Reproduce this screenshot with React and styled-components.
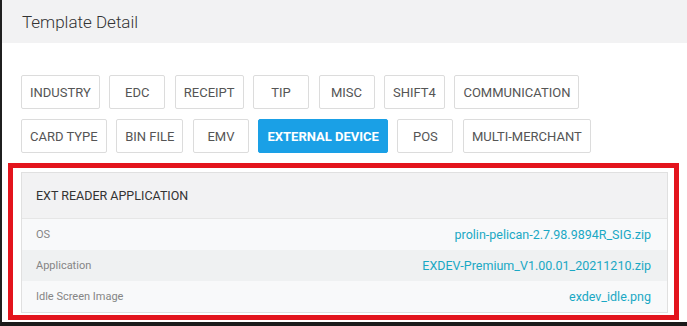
import React, { useState } from "react";
import styled, { createGlobalStyle } from "styled-components";

const GlobalStyle = createGlobalStyle`
  html, body {
    margin: 0;
    padding: 0;
    background: #fff;
  }
  body {
    font-family: Roboto, "Liberation Sans", Arial, sans-serif;
  }
`;

const Card = styled.div`
  box-sizing: border-box;
  height: 326px;
  border-left: 2px solid #1f1f1f;
  border-bottom: 4px solid #1a1a1a;
  background: #fff;
  overflow: hidden;
`;

const CardHeader = styled.div`
  height: 43px;
  display: flex;
  align-items: center;
  padding-left: 20px;
  background: #f2f2f3;
  color: #333;
  font-size: 17px;
  font-weight: 300;
`;

const CardBody = styled.div`
  padding: 32px 8px 0 6px;
`;

const TabGroup = styled.div`
  display: flex;
  flex-wrap: wrap;
  gap: 10px 9.5px;
  max-width: 640px;
  padding-left: 13px;
`;

const TabButton = styled.button`
  box-sizing: border-box;
  height: 34px;
  min-width: 56px;
  padding: 0 8px;
  border: 1px solid ${(p) => (p.$active ? "#1aa0e6" : "#dcdcdc")};
  border-radius: 2px;
  background: ${(p) => (p.$active ? "#1aa0e6" : "#fff")};
  color: ${(p) => (p.$active ? "#fff" : "#555")};
  font-family: inherit;
  font-size: 13px;
  font-weight: ${(p) => (p.$active ? 700 : 400)};
  cursor: pointer;
`;

const Highlight = styled.div`
  margin-top: 10px;
  border: 5px solid #e3141d;
  padding: 4px 6px 2px 8px;
`;

const Panel = styled.div`
  border: 1px solid #e0e0e0;
`;

const PanelHeader = styled.div`
  height: 45px;
  display: flex;
  align-items: center;
  padding: 0 14px;
  background: #f2f2f3;
  border-bottom: 1px solid #e6e6e6;
  color: #333;
  font-size: 12.5px;
`;

const Row = styled.div`
  height: 31px;
  display: flex;
  align-items: center;
  justify-content: space-between;
  padding: 0 16px 0 14px;
  background: ${(p) => (p.$striped ? "#eff1f2" : "#f8f9fa")};
`;

const Label = styled.span`
  color: #858585;
  font-size: 11px;
`;

const FileLink = styled.a`
  color: #1aa8c4;
  font-size: 12.5px;
  text-decoration: none;
`;

const tabs = [
  "INDUSTRY",
  "EDC",
  "RECEIPT",
  "TIP",
  "MISC",
  "SHIFT4",
  "COMMUNICATION",
  "CARD TYPE",
  "BIN FILE",
  "EMV",
  "EXTERNAL DEVICE",
  "POS",
  "MULTI-MERCHANT",
];

const files = [
  { label: "OS", file: "prolin-pelican-2.7.98.9894R_SIG.zip" },
  { label: "Application", file: "EXDEV-Premium_V1.00.01_20211210.zip" },
  { label: "Idle Screen Image", file: "exdev_idle.png" },
];

function App() {
  const [activeTab, setActiveTab] = useState("EXTERNAL DEVICE");

  return (
    <>
      <GlobalStyle />
      <Card>
        <CardHeader>Template Detail</CardHeader>
        <CardBody>
          <TabGroup>
            {tabs.map((tab) => (
              <TabButton
                key={tab}
                $active={tab === activeTab}
                onClick={() => setActiveTab(tab)}
              >
                {tab}
              </TabButton>
            ))}
          </TabGroup>
          <Highlight>
            <Panel>
              <PanelHeader>EXT READER APPLICATION</PanelHeader>
              {files.map((item, i) => (
                <Row key={item.label} $striped={i % 2 === 1}>
                  <Label>{item.label}</Label>
                  <FileLink href="#">{item.file}</FileLink>
                </Row>
              ))}
            </Panel>
          </Highlight>
        </CardBody>
      </Card>
    </>
  );
}

export default App;
